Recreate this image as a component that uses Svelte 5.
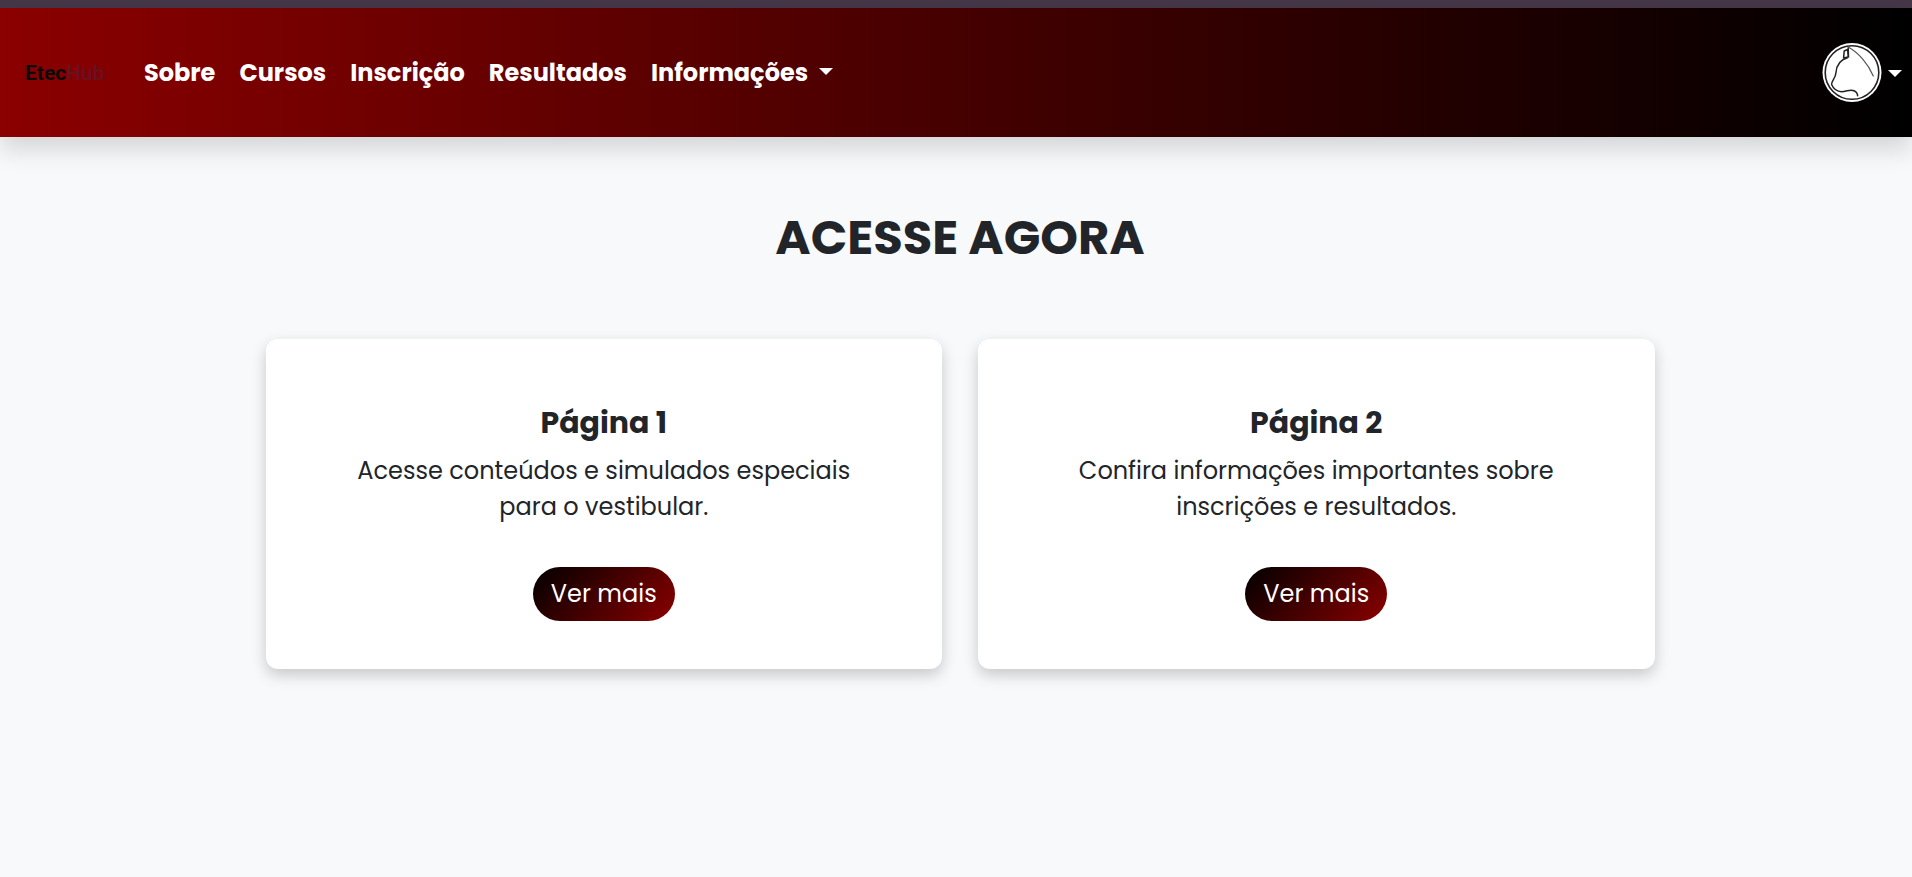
<script>
  const links = ['Sobre', 'Cursos', 'Inscrição', 'Resultados'];
  const cards = [
    { title: 'Página 1', text: 'Acesse conteúdos e simulados especiais para o vestibular.' },
    { title: 'Página 2', text: 'Confira informações importantes sobre inscrições e resultados.' }
  ];
</script>

<div class="page">
  <header>
    <nav>
      <a class="brand" href="#inicio">Etec<span>Hub</span></a>
      <ul>
        {#each links as link}
          <li><a href="#{link.toLowerCase()}">{link}</a></li>
        {/each}
        <li><button class="menu" type="button">Informações <i class="caret"></i></button></li>
      </ul>
      <button class="profile" type="button" aria-label="Perfil">
        <svg viewBox="0 0 60 60" aria-hidden="true">
          <circle cx="30" cy="29.5" r="29.5" fill="#fff" />
          <g fill="none" stroke="#222" stroke-linecap="round" stroke-linejoin="round">
            <circle cx="30" cy="29.5" r="26.8" stroke-width="1.6" />
            <path d="M26 14 21.6 14.9 22.2 8 25.6 6.5 26.2 13.9M26.2 4.7 26.5 14.1" stroke-width="1.5" />
            <path d="M25.4 14.7C19 16.5 14.6 21.5 14 29.5C13.6 35.5 9.4 37.5 9.6 41.5C11.3 45.5 14.5 48.5 19.5 48.7C25 48.5 28 45.9 32 47.7C34.5 48.9 35.6 50.5 35.6 52.7" stroke-width="1.5" />
            <path d="M27 4.5C36 9.5 46 20.5 51.3 33" stroke-width="1.2" stroke="#555" />
          </g>
        </svg>
        <i class="caret"></i>
      </button>
    </nav>
  </header>

  <main>
    <h1>ACESSE AGORA</h1>
    <div class="cards">
      {#each cards as card}
        <article>
          <h2>{card.title}</h2>
          <p>{card.text}</p>
          <button type="button">Ver mais</button>
        </article>
      {/each}
    </div>
  </main>
</div>

<style>
  :global(body) {
    background: #f8f9fb;
  }
  .page {
    min-height: 100vh;
    box-sizing: border-box;
    border-top: 8px solid #453748;
    color: #212529;
    font: 24px/36px Poppins, Inter, sans-serif;
  }
  header {
    background: linear-gradient(90deg, #8b0000, #000);
    box-shadow: 0 12px 24px rgba(0, 0, 0, 0.15);
  }
  nav {
    display: flex;
    align-items: center;
    padding: 35px 10px 34px 25px;
  }
  a {
    color: inherit;
    text-decoration: none;
  }
  button {
    padding: 0;
    border: 0;
    background: none;
    color: inherit;
    font: inherit;
    cursor: pointer;
  }
  .brand {
    width: 119px;
    color: #0c0c0c;
    font: 700 21px/30px Roboto, sans-serif;
  }
  .brand span {
    color: #671222;
    font-weight: 500;
  }
  ul {
    display: flex;
    gap: 24px;
    margin: 0;
    padding: 0;
    list-style: none;
    color: #fff;
    font-weight: 700;
  }
  .menu,
  .profile {
    display: flex;
    align-items: center;
  }
  .menu {
    gap: 11px;
  }
  .caret {
    border: 7px solid transparent;
    border-top-color: #fff;
    border-bottom: 0;
  }
  .menu .caret {
    margin-bottom: 4px;
  }
  .profile {
    gap: 6px;
    margin-left: auto;
  }
  svg {
    width: 60px;
    height: 60px;
  }
  main {
    max-width: 1389px;
    margin: 0 auto;
    padding: 72px 12px 48px 20px;
    text-align: center;
  }
  h1 {
    margin: 0 0 72px;
    font-size: 48px;
    line-height: 58px;
    font-weight: 700;
  }
  .cards {
    display: grid;
    grid-template-columns: 1fr 1fr;
    gap: 36px;
  }
  article {
    padding: 66px 72px 48px;
    border-radius: 12px;
    background: #fff;
    box-shadow: 0 6px 15px rgba(0, 0, 0, 0.2);
  }
  h2 {
    margin: 0 0 12px;
    font-size: 30px;
    line-height: 36px;
    font-weight: 700;
  }
  p {
    margin: 0 0 42px;
  }
  article button {
    padding: 9px 18px;
    border-radius: 30px;
    background: linear-gradient(135deg, #000, #8b0000);
    color: #fff;
  }
</style>
